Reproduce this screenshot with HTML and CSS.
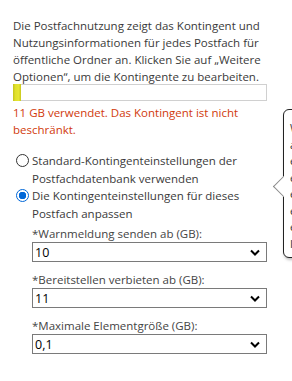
FILE: index.html
```html
<!DOCTYPE html>
<html lang="de">
  <head>
    <meta charset="UTF-8" />
    <meta name="viewport" content="width=device-width, initial-scale=1.0" />
    <title>Postfachnutzung</title>
    <link rel="stylesheet" href="styles.css">
  </head>
  <body>
    <div class="panel">
      <p class="intro">
        Die Postfachnutzung zeigt das Kontingent und Nutzungsinformationen für jedes Postfach für
        öffentliche Ordner an. Klicken Sie auf „Weitere Optionen“, um die Kontingente zu bearbeiten.
      </p>

      <div class="usage-bar">
        <div class="usage-fill" style="width: 8px"></div>
      </div>

      <p class="usage-text">11 GB verwendet. Das Kontingent ist nicht beschränkt.</p>

      <div class="options">
        <label class="radio-row">
          <input type="radio" name="quota" value="default" />
          <span>Standard-Kontingenteinstellungen der Postfachdatenbank verwenden</span>
        </label>
        <label class="radio-row">
          <input type="radio" name="quota" value="custom" checked />
          <span>Die Kontingenteinstellungen für dieses Postfach anpassen</span>
        </label>
      </div>

      <div class="fields">
        <div class="field">
          <label for="warn">*Warnmeldung senden ab (GB):</label>
          <select id="warn">
            <option>10</option>
          </select>
        </div>
        <div class="field">
          <label for="prohibit">*Bereitstellen verbieten ab (GB):</label>
          <select id="prohibit">
            <option>11</option>
          </select>
        </div>
        <div class="field">
          <label for="maxsize">*Maximale Elementgröße (GB):</label>
          <select id="maxsize">
            <option>0,1</option>
          </select>
        </div>
      </div>
    </div>

    <div class="callout">
      <p>Wenn die Größe des Postfachs<br>als Kontingent<br>erreicht oder<br>erreicht hat, werden<br>einige Vorgänge<br>eingeschränkt.<br>erneut.<br>Im</p>
    </div>
  </body>
</html>
```

FILE: styles.css
```css
* {
  margin: 0;
  padding: 0;
  box-sizing: border-box;
}

html,
body {
  width: 292px;
  height: 381px;
  overflow: hidden;
}

body {
  background-color: #ffffff;
  color: #3a3a3a;
  font-family: "Segoe UI", "Open Sans", Lato, sans-serif;
  font-size: 11.5px;
  line-height: 17px;
  position: relative;
}

.panel {
  padding: 17px 25px 0 13px;
}

.intro {
  width: 254px;
}

.usage-bar {
  width: 254px;
  height: 17px;
  margin-top: -1px;
  border: 1px solid #d0d0d0;
  display: flex;
}

.usage-fill {
  background: linear-gradient(90deg, #c4c41c 0%, #e0e02c 30%, #e6e633 70%, #c8c81e 100%);
  margin: -1px 0 -1px -1px;
}

.usage-text {
  color: #d13a0c;
  margin-top: 3px;
  width: 254px;
}

.options {
  margin-top: 14px;
  display: flex;
  flex-direction: column;
  line-height: 17.5px;
}

.radio-row {
  display: flex;
  align-items: flex-start;
  gap: 3px;
  cursor: pointer;
}

.radio-row input {
  appearance: none;
  width: 13px;
  height: 13px;
  margin: 2px 0 0 3px;
  border: 1px solid #333333;
  border-radius: 50%;
  flex-shrink: 0;
  background: #ffffff;
}

.radio-row input:checked {
  border-color: #0067d8;
  background: radial-gradient(circle, #0067d8 0 3.5px, #ffffff 4px);
}

.fields {
  margin-top: 3px;
  padding-left: 19px;
  display: flex;
  flex-direction: column;
  gap: 9px;
}

.field label {
  display: block;
  color: #444444;
}

.field select {
  appearance: none;
  display: block;
  width: 235px;
  height: 20px;
  padding: 0 20px 0 2px;
  border: 1px solid #7a7a7a;
  border-radius: 0;
  background-color: #ffffff;
  color: #000000;
  font-family: inherit;
  font-size: 12.5px;
  background-image: url("data:image/svg+xml;charset=UTF-8,%3csvg xmlns='http://www.w3.org/2000/svg' viewBox='0 0 10 7'%3e%3cpath d='M1 1.5l4 4 4-4' fill='none' stroke='%23000' stroke-width='2'/%3e%3c/svg%3e");
  background-repeat: no-repeat;
  background-position: right 6px center;
  background-size: 10px 7px;
}

.callout {
  position: absolute;
  left: 283px;
  top: 109px;
  width: 200px;
  height: 149px;
  border: 1px solid #222222;
  border-radius: 6px;
  background: #ffffff;
  box-shadow: 1px 2px 3px rgba(0, 0, 0, 0.25);
  padding: 10px 6px;
  font-size: 11px;
  line-height: 16.5px;
  color: #333333;
}

.callout::before {
  content: "";
  position: absolute;
  left: -8px;
  top: 69px;
  width: 14px;
  height: 14px;
  background: #ffffff;
  border-left: 1px solid #8a8a8a;
  border-bottom: 1px solid #8a8a8a;
  transform: rotate(45deg);
}
```
